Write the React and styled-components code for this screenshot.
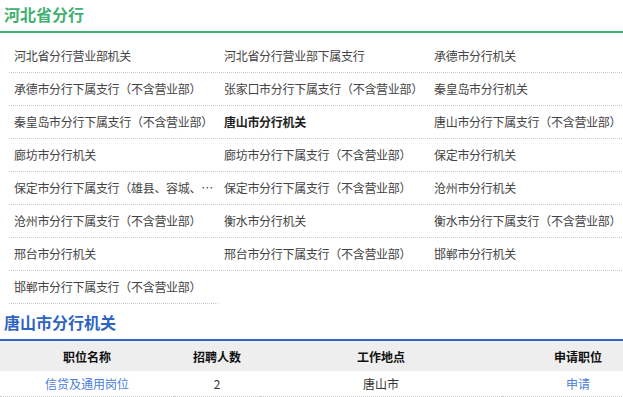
import React from 'react';
import styled, { createGlobalStyle } from 'styled-components';

const GlobalStyle = createGlobalStyle`
  html, body {
    margin: 0;
    padding: 0;
    background: #fff;
    overflow: hidden;
  }
  body {
    font-family: "Noto Sans CJK SC", "Liberation Sans", sans-serif;
    font-size: 12px;
    color: #333;
  }
`;

const Page = styled.div`
  width: 623px;
  overflow: hidden;
`;

const SectionTitle = styled.h2`
  margin: 0;
  height: 31px;
  padding: 0 4px;
  font-size: 16px;
  line-height: 28px;
  font-weight: bold;
  color: ${props => props.color};
  border-bottom: 2px solid ${props => props.color};
`;

const BranchList = styled.ul`
  list-style: none;
  margin: 0;
  padding: 7px 0 0 9px;
  display: grid;
  grid-template-columns: 210px 210px 210px;
`;

const BranchItem = styled.li`
  height: 32px;
  line-height: 32px;
  margin-right: 1px;
  padding: 0 0 0 5px;
  border-bottom: 1px dotted #c8c8c8;
  letter-spacing: -0.3px;
  white-space: nowrap;
  overflow: hidden;
  text-overflow: ellipsis;
  font-weight: ${props => (props.active ? 'bold' : 'normal')};
  color: ${props => (props.active ? '#222' : '#444')};
  cursor: pointer;
`;

const Gap = styled.div`
  height: 4px;
`;

const JobTable = styled.table`
  width: 654px;
  border-collapse: collapse;
  table-layout: fixed;
`;

const HeadCell = styled.th`
  height: 30px;
  padding: 0;
  background: #eeeeee;
  color: #111;
  font-weight: bold;
  font-size: 12px;
  text-align: center;
`;

const Cell = styled.td`
  height: 25px;
  padding: 0;
  text-align: center;
  border-bottom: 1px dotted #c8c8c8;
`;

const Link = styled.a`
  color: #4b80d8;
  text-decoration: none;
`;

const branches = [
  '河北省分行营业部机关',
  '河北省分行营业部下属支行',
  '承德市分行机关',
  '承德市分行下属支行（不含营业部）',
  '张家口市分行下属支行（不含营业部）',
  '秦皇岛市分行机关',
  '秦皇岛市分行下属支行（不含营业部）',
  '唐山市分行机关',
  '唐山市分行下属支行（不含营业部）',
  '廊坊市分行机关',
  '廊坊市分行下属支行（不含营业部）',
  '保定市分行机关',
  '保定市分行下属支行（雄县、容城、安新县）',
  '保定市分行下属支行（不含营业部）',
  '沧州市分行机关',
  '沧州市分行下属支行（不含营业部）',
  '衡水市分行机关',
  '衡水市分行下属支行（不含营业部）',
  '邢台市分行机关',
  '邢台市分行下属支行（不含营业部）',
  '邯郸市分行机关',
  '邯郸市分行下属支行（不含营业部）',
];

const jobs = [
  { name: '信贷及通用岗位', count: 2, place: '唐山市' },
];

function App() {
  const active = '唐山市分行机关';

  return (
    <Page>
      <GlobalStyle />
      <SectionTitle color="#42b070">河北省分行</SectionTitle>
      <BranchList>
        {branches.map(b => (
          <BranchItem key={b} active={b === active} title={b}>{b}</BranchItem>
        ))}
      </BranchList>
      <Gap />
      <SectionTitle color="#2d64c1">{active}</SectionTitle>
      <JobTable>
        <colgroup>
          <col style={{ width: 174 }} />
          <col style={{ width: 86 }} />
          <col style={{ width: 242 }} />
          <col style={{ width: 152 }} />
        </colgroup>
        <thead>
          <tr>
            <HeadCell>职位名称</HeadCell>
            <HeadCell>招聘人数</HeadCell>
            <HeadCell>工作地点</HeadCell>
            <HeadCell>申请职位</HeadCell>
          </tr>
        </thead>
        <tbody>
          {jobs.map(job => (
            <tr key={job.name}>
              <Cell><Link href="#">{job.name}</Link></Cell>
              <Cell>{job.count}</Cell>
              <Cell>{job.place}</Cell>
              <Cell><Link href="#">申请</Link></Cell>
            </tr>
          ))}
        </tbody>
      </JobTable>
    </Page>
  );
}

export default App;
